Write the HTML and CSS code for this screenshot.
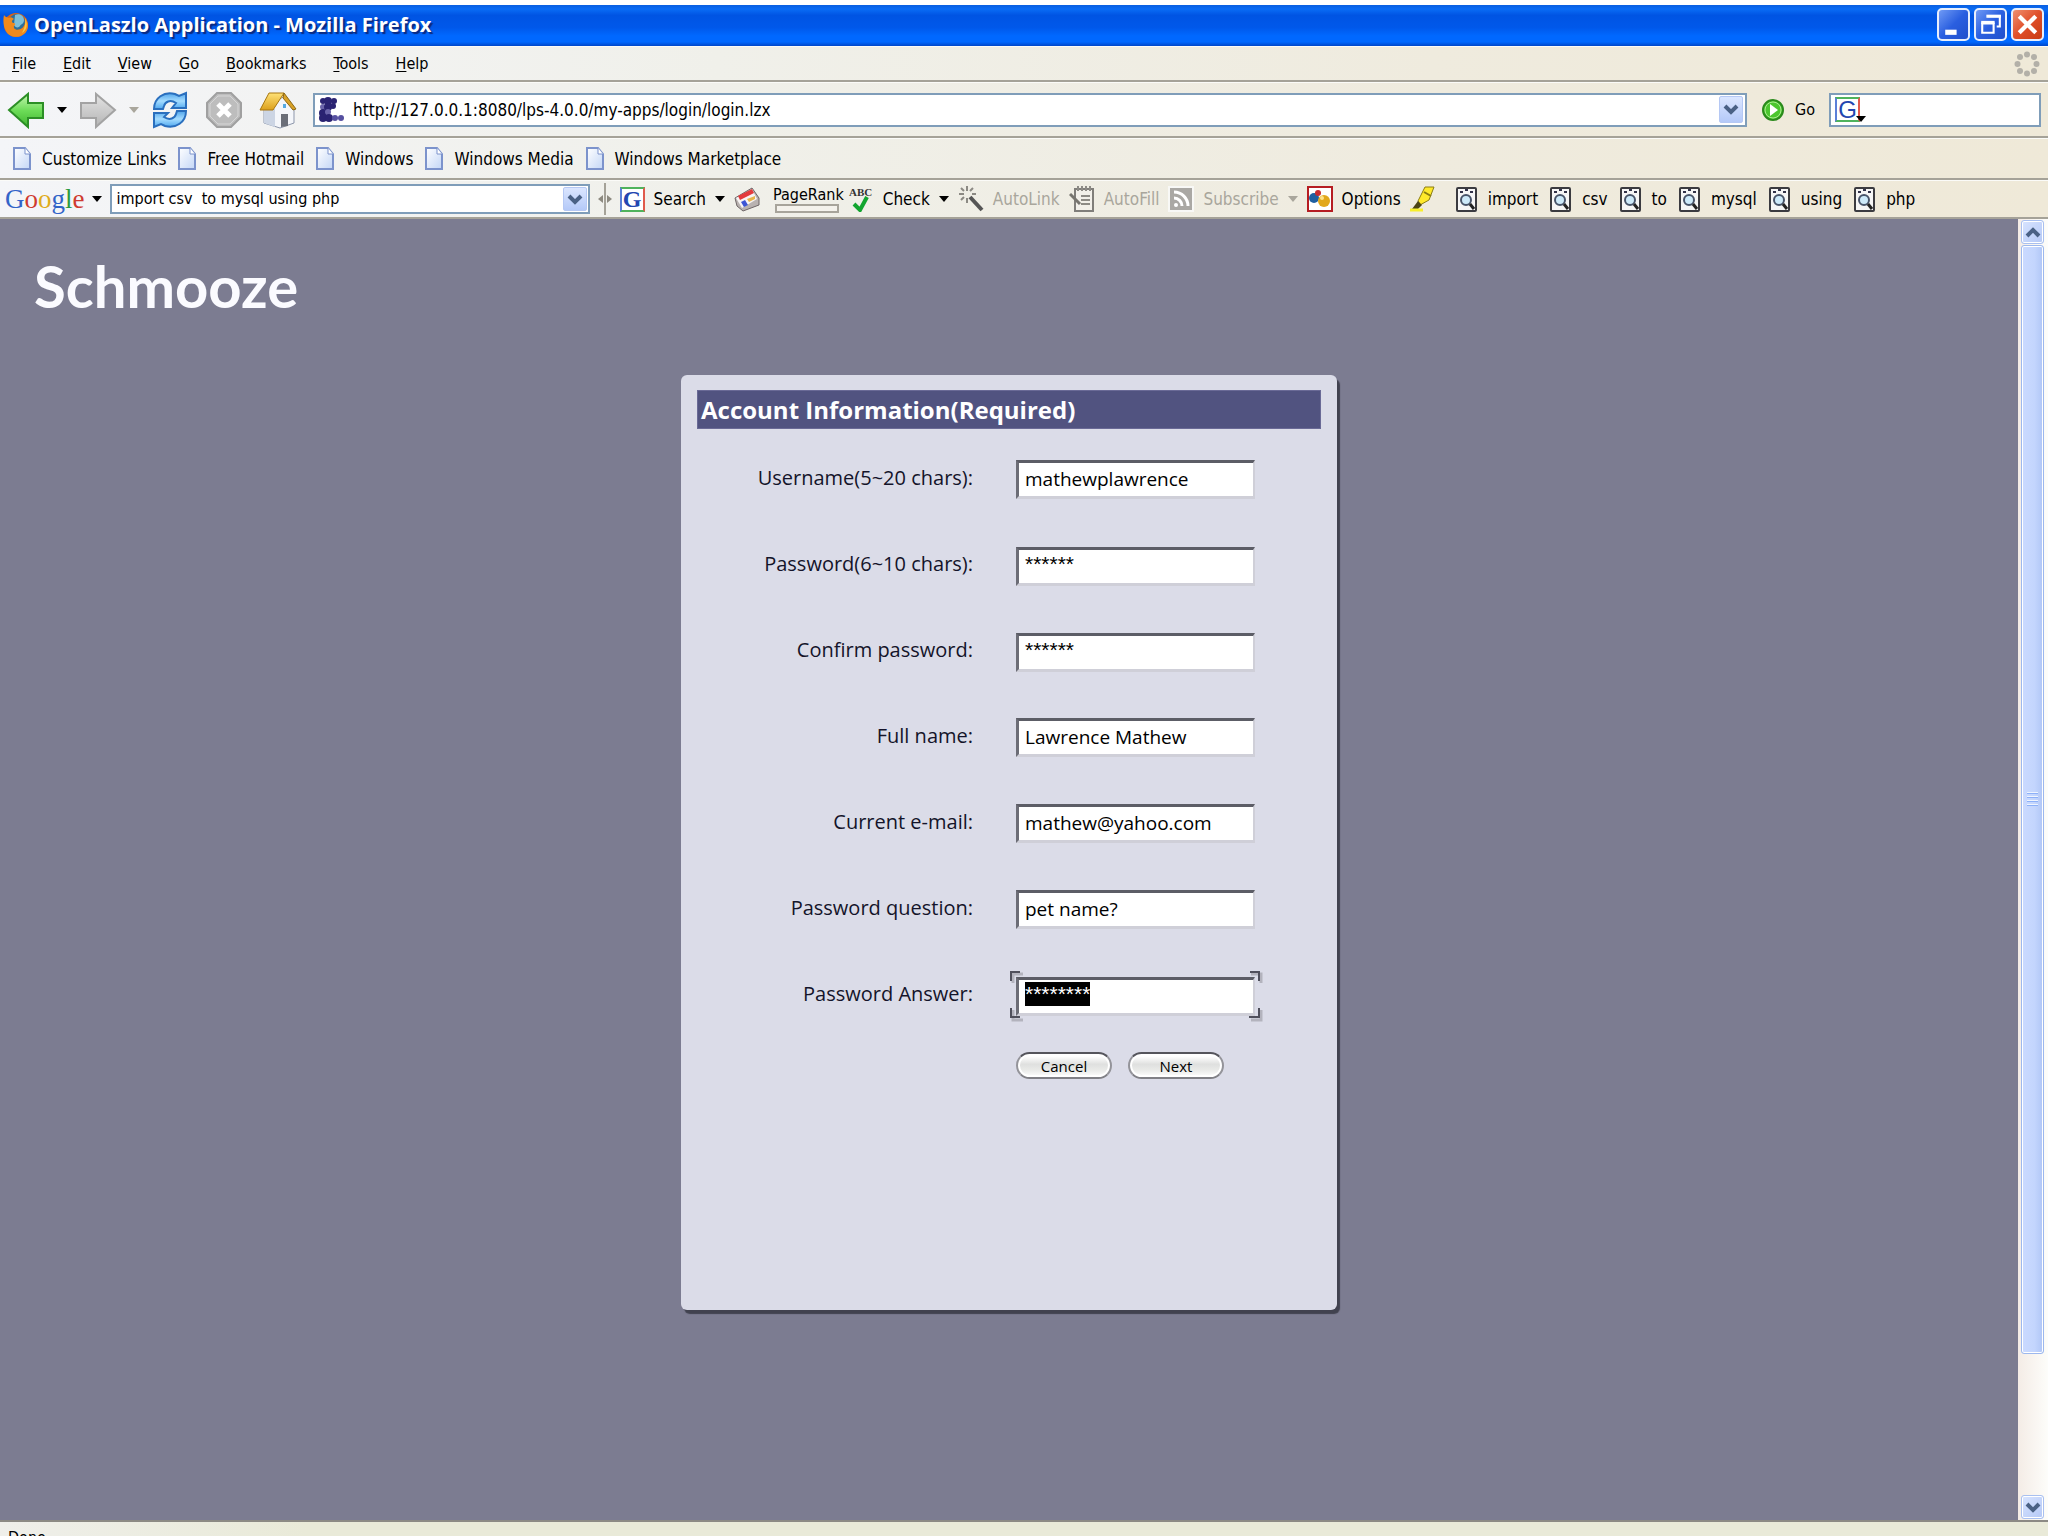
FILE: index.html
```html
<!DOCTYPE html>
<html lang="en">
<head>
<meta charset="utf-8">
<title>OpenLaszlo Application - Mozilla Firefox</title>
<link rel="stylesheet" href="styles.css">
</head>
<body>
<svg class="defs" aria-hidden="true">
  <defs>
    <linearGradient id="gGreen" x1="0" y1="0" x2="0" y2="1"><stop offset="0" stop-color="#c4f6b0"/><stop offset=".5" stop-color="#6ddc58"/><stop offset="1" stop-color="#3fb52f"/></linearGradient>
    <linearGradient id="gGray" x1="0" y1="0" x2="0" y2="1"><stop offset="0" stop-color="#e4e4e4"/><stop offset="1" stop-color="#b4b4b4"/></linearGradient>
    <linearGradient id="gBlue" x1="0" y1="0" x2="0" y2="1"><stop offset="0" stop-color="#4fa4ea"/><stop offset=".5" stop-color="#a5dcff"/><stop offset="1" stop-color="#4fa8ef"/></linearGradient>
    <linearGradient id="gPage" x1="0" y1="0" x2="1" y2="1"><stop offset="0" stop-color="#ffffff"/><stop offset="1" stop-color="#c3d6f6"/></linearGradient>
    <linearGradient id="gRoof" x1="0" y1="0" x2="0" y2="1"><stop offset="0" stop-color="#ffe277"/><stop offset="1" stop-color="#dca01c"/></linearGradient>
    <symbol id="page" viewBox="0 0 18 23"><path d="M1 1h11l5 6v15H1z" fill="url(#gPage)" stroke="#7c93cc" stroke-width="2"/><path d="M12 1v6h5" fill="#fff" stroke="#7c93cc"/></symbol>
    <symbol id="tri" viewBox="0 0 10 6"><path d="M0 0h10L5 6z" fill="currentColor"/></symbol>
    <symbol id="chev" viewBox="0 0 16 11"><path d="M2 2l6 6 6-6" fill="none" stroke="#4a6185" stroke-width="4"/></symbol>
    <symbol id="find" viewBox="0 0 21 25"><rect x="1" y="1" width="19" height="23" rx="1" fill="#f6f6f6" stroke="#3b3b40" stroke-width="2"/><path d="M4 5h3M9 3h3M14 5h3" stroke="#33334a" stroke-width="2"/><circle cx="10" cy="13" r="5" fill="#cdeafa" stroke="#48546a" stroke-width="2"/><path d="M14 17l4 5" stroke="#222" stroke-width="3"/></symbol>
  </defs>
</svg>

<header class="titlebar">
  <svg class="fox" viewBox="0 0 26 26"><circle cx="13" cy="13" r="12" fill="#d8641a"/><circle cx="14" cy="10" r="8" fill="#2c6f9c"/><path d="M12 3c5-2 9 1 9 5s-3 4-4 6-5 2-6-1z" fill="#7fc0d8"/><path d="M1 3c1 2 3 2 5 3 2-1 4 0 5 1-2 1-3 3-1 4 2 0 3 1 1 3-1 3 3 5 7 3 4-2 5-6 4-11 4 5 4 12-1 16-6 5-15 3-18-3C0 14 0 8 1 3z" fill="#f08a1d"/><path d="M22 6c3 6 2 12-3 15 2-4 4-8 3-15z" fill="#fbc743"/></svg>
  <h1 class="window-title">OpenLaszlo Application - Mozilla Firefox</h1>
  <div class="window-buttons">
    <button class="win" aria-label="Minimize"><svg viewBox="0 0 28 28"><path d="M6 19h11v5H6z" fill="#fff"/></svg></button>
    <button class="win" aria-label="Restore"><svg viewBox="0 0 28 28"><path d="M11 6h12v10h-3" fill="none" stroke="#fff" stroke-width="2"/><path d="M10 6h14" stroke="#fff" stroke-width="3"/><path d="M6 13h11v9H6z" fill="none" stroke="#fff" stroke-width="2"/><path d="M5 12h13" stroke="#fff" stroke-width="3"/></svg></button>
    <button class="win close" aria-label="Close"><svg viewBox="0 0 28 28"><path d="M6 6l16 16M22 6L6 22" stroke="#fff" stroke-width="4"/></svg></button>
  </div>
</header>

<div class="chrome">
  <nav class="bar menubar">
    <button><u>F</u>ile</button>
    <button><u>E</u>dit</button>
    <button><u>V</u>iew</button>
    <button><u>G</u>o</button>
    <button><u>B</u>ookmarks</button>
    <button><u>T</u>ools</button>
    <button><u>H</u>elp</button>
    <svg class="throbber" viewBox="0 0 26 26" fill="#b3b0a8"><circle cx="13" cy="3.500" r="3"/><circle cx="20" cy="6" r="3"/><circle cx="22.500" cy="13" r="3"/><circle cx="20" cy="20" r="3"/><circle cx="13" cy="22.500" r="3"/><circle cx="6" cy="20" r="3"/><circle cx="3.500" cy="13" r="3"/><circle cx="6" cy="6" r="3"/></svg>
  </nav>

  <div class="bar navbar">
    <button aria-label="Back"><svg class="i38" viewBox="0 0 38 38"><path d="M2 19L21 3v9h15v15H21v9z" fill="url(#gGreen)" stroke="#2c8f26" stroke-width="2"/></svg></button>
    <button class="drop" aria-label="Back history"><svg class="tri"><use href="#tri"/></svg></button>
    <button aria-label="Forward"><svg class="i38" viewBox="0 0 38 38"><path d="M36 19L17 3v9H2v15h15v9z" fill="url(#gGray)" stroke="#a3a3a3" stroke-width="2"/></svg></button>
    <button class="drop dim" aria-label="Forward history"><svg class="tri"><use href="#tri"/></svg></button>
    <button class="tool" aria-label="Reload"><svg class="i38" viewBox="0 0 38 38"><path d="M3 18C3 7 13 0 24 3l4 2 7-3v15H21l4-5c-6-4-11-1-12 3l-1 3z" fill="url(#gBlue)" stroke="#2a6fbe" stroke-width="2"/><path d="M35 20c0 11-10 18-21 15l-4-2-7 3V22h14l-4 4c6 4 11 1 12-3l1-3z" fill="url(#gBlue)" stroke="#2a6fbe" stroke-width="2"/></svg></button>
    <button class="tool" aria-label="Stop"><svg class="i38" viewBox="0 0 38 38"><path d="M12 2h14l10 10v14L26 36H12L2 26V12z" fill="#bdbdbd" stroke="#a0a0a0" stroke-width="2"/><path d="M13 5h12l8 8v12l-8 8H13l-8-8V13z" fill="none" stroke="#d6d6d6"/><path d="M13 13l12 12M25 13L13 25" stroke="#fff" stroke-width="5"/></svg></button>
    <button class="tool" aria-label="Home"><svg class="i38" viewBox="0 0 38 38"><path d="M5 17v15l16 5 14-5V17L26 5z" fill="#f4f6fa" stroke="#8d97ab"/><path d="M5 17v15l11 4V18z" fill="#ccd5e4"/><path d="M22 23h7v12l-7 1z" fill="#6a6e78"/><path d="M24 13h3v4h-3z" fill="#55a9e2"/><path d="M10 2h15L14 19H1z" fill="url(#gRoof)" stroke="#a87710"/><path d="M25 2l12 16-3 1-10-12z" fill="#d9a227" stroke="#8c6713"/></svg></button>
    <div class="combo urlbox">
      <svg class="favicon" viewBox="0 0 25 25" fill="#2a2372"><circle cx="4" cy="4" r="3"/><circle cx="9" cy="4" r="4"/><circle cx="15" cy="4" r="3"/><circle cx="4" cy="10" r="3" fill="#6a64aa"/><circle cx="9" cy="10" r="4"/><circle cx="14" cy="9" r="3"/><circle cx="4" cy="16" r="4"/><circle cx="9" cy="15" r="3" fill="#6a64aa"/><circle cx="4" cy="21" r="4"/><circle cx="10" cy="21" r="4"/><circle cx="16" cy="21" r="3" fill="#5650a0"/><circle cx="22" cy="21" r="3" fill="#5650a0"/></svg>
      <input type="text" aria-label="Location" value="http://127.0.0.1:8080/lps-4.0.0/my-apps/login/login.lzx">
      <button class="arrow" aria-label="Show history"><svg class="chev"><use href="#chev"/></svg></button>
    </div>
    <button class="go"><svg class="i24" viewBox="0 0 24 24"><circle cx="12" cy="12" r="10" fill="#4cc62f" stroke="#2b8a1c" stroke-width="2"/><circle cx="12" cy="12" r="8" fill="none" stroke="#a9ec8e"/><path d="M9 6l8 6-8 6z" fill="#fff"/></svg>Go</button>
    <div class="combo searchbox">
      <button class="engine" aria-label="Search engine"><span class="gbox">G</span><svg class="tri"><use href="#tri"/></svg></button>
      <input type="text" aria-label="Web search">
    </div>
  </div>

  <nav class="bar links">
    <a href="#"><svg class="page"><use href="#page"/></svg>Customize Links</a>
    <a href="#"><svg class="page"><use href="#page"/></svg>Free Hotmail</a>
    <a href="#"><svg class="page"><use href="#page"/></svg>Windows</a>
    <a href="#"><svg class="page"><use href="#page"/></svg>Windows Media</a>
    <a href="#"><svg class="page"><use href="#page"/></svg>Windows Marketplace</a>
  </nav>

  <div class="bar googlebar">
    <button class="logo"><span class="wordmark"><span class="b">G</span><span class="r">o</span><span class="y">o</span><span class="b">g</span><span class="g">l</span><span class="r">e</span></span><svg class="tri"><use href="#tri"/></svg></button>
    <div class="combo querybox">
      <input type="text" aria-label="Google search" value="import csv  to mysql using php">
      <button class="arrow" aria-label="Search history"><svg class="chev"><use href="#chev"/></svg></button>
    </div>
    <svg class="splitter" viewBox="0 0 14 32"><path d="M7 0v32" stroke="#a5a298" stroke-width="2"/><path d="M5 12v8l-5-4zM9 12v8l5-4z" fill="#8d8a80"/></svg>
    <button class="gtool search"><span class="gbox">G</span>Search<svg class="tri"><use href="#tri"/></svg></button>
    <button class="gtool" aria-label="News"><svg class="i26" viewBox="0 0 26 26"><path d="M1 12l17-10 7 10v7L9 25 3 20z" fill="#b8b2b0" stroke="#6e6667"/><path d="M2 12L18 3l5 10L8 22z" fill="#f7f4f4"/><path d="M4 10l14-7 2 4-14 7z" fill="#e33b3d"/><path d="M7 16l4-2 3 5-4 2z" fill="#3c55d4"/><path d="M13 13l8-3v3l-6 3z" fill="#e7b54c"/></svg></button>
    <div class="pagerank"><span>PageRank</span><i></i></div>
    <button class="gtool check"><svg class="i26" viewBox="0 0 26 26"><text x="1" y="10" class="abc">ABC</text><path d="M6 18l6 6 7-13" fill="none" stroke="#12a52f" stroke-width="4"/></svg>Check<svg class="tri"><use href="#tri"/></svg></button>
    <button class="gtool dim"><svg class="i26" viewBox="0 0 26 26"><path d="M12 11l12 13" stroke="#555" stroke-width="4"/><path d="M9 0v5M9 12v5M1 8h5M3 2l3 3M15 2l-3 3M3 14l3-3M14 8h4" stroke="#8c8a84" stroke-width="2"/></svg>AutoLink</button>
    <button class="gtool dim"><svg class="i26" viewBox="0 0 26 26"><path d="M6 3h18v22H6z" fill="#f2f0ea" stroke="#807e7a" stroke-width="2"/><path d="M9 0v5M13 0v5M17 0v5M21 0v5M12 10h9M12 14h9M12 18h9" stroke="#8d8b86" stroke-width="2"/><path d="M1 8l10 10" stroke="#77756f" stroke-width="3"/></svg>AutoFill</button>
    <button class="gtool dim"><svg class="i26" viewBox="0 0 26 26"><rect x="1" y="1" width="24" height="24" fill="#aaa8a4" stroke="#f8f8f6" stroke-width="2"/><circle cx="8" cy="19" r="2" fill="#fff"/><path d="M6 12a8 8 0 018 8M6 6a14 14 0 0114 14" fill="none" stroke="#fff" stroke-width="3"/></svg>Subscribe<svg class="tri"><use href="#tri"/></svg></button>
    <button class="gtool"><svg class="i26" viewBox="0 0 26 26"><rect x="1" y="1" width="24" height="24" fill="#fff" stroke="#b61d22" stroke-width="2"/><circle cx="7" cy="12" r="5" fill="#1f5fa0"/><circle cx="11" cy="7" r="3" fill="#c72a2e"/><circle cx="17" cy="15" r="6" fill="#e2a81b"/><circle cx="15" cy="12" r="2" fill="#ffe28a"/></svg>Options</button>
    <button class="gtool" aria-label="Highlight"><svg class="i26" viewBox="0 0 26 26"><path d="M15 1h9l-5 13-9 5-2-4z" fill="#ffe92b" stroke="#8b7d12"/><path d="M14 6l7 4" stroke="#8b7d12" stroke-width="2"/><path d="M8 15l4 4-4 4H2z" fill="#4b4412"/><path d="M0 24h13" stroke="#f7ef2a" stroke-width="3"/></svg></button>
    <div class="words">
      <button><svg class="find"><use href="#find"/></svg>import</button>
      <button><svg class="find"><use href="#find"/></svg>csv</button>
      <button><svg class="find"><use href="#find"/></svg>to</button>
      <button><svg class="find"><use href="#find"/></svg>mysql</button>
      <button><svg class="find"><use href="#find"/></svg>using</button>
      <button><svg class="find"><use href="#find"/></svg>php</button>
    </div>
  </div>
</div>

<div class="viewport">
  <main class="app">
    <h2 class="brand">Schmooze</h2>
    <form class="panel">
      <h3 class="panel-title">Account Information(Required)</h3>
      <div class="fields">
        <label for="user">Username(5~20 chars):</label>
        <div class="field"><input id="user" type="text" value="mathewplawrence"></div>
        <label for="pass">Password(6~10 chars):</label>
        <div class="field"><input id="pass" class="masked" type="text" value="******"></div>
        <label for="confirm">Confirm password:</label>
        <div class="field"><input id="confirm" class="masked" type="text" value="******"></div>
        <label for="full">Full name:</label>
        <div class="field"><input id="full" type="text" value="Lawrence Mathew"></div>
        <label for="mail">Current e-mail:</label>
        <div class="field"><input id="mail" type="text" value="mathew@yahoo.com"></div>
        <label for="question">Password question:</label>
        <div class="field"><input id="question" type="text" value="pet name?"></div>
        <label for="answer">Password Answer:</label>
        <div class="field">
          <input id="answer" class="masked" type="text" value="********">
          <svg class="brackets" viewBox="0 0 254 52" fill="none" stroke-width="3"><path d="M4 13V4h10M242 4h10v9M252 40v10h-10M14 50H4V40" stroke="#b3b3bd"/><path d="M2 11V2h9M241 2h9v9M250 38v9h-10M11 47H2V38" stroke="#50505c" stroke-width="2"/></svg>
        </div>
      </div>
      <div class="actions">
        <button type="button">Cancel</button>
        <button type="button">Next</button>
      </div>
    </form>
  </main>
  <div class="scrollbar">
    <button class="sb" aria-label="Scroll up"><svg class="chev up"><use href="#chev"/></svg></button>
    <div class="track"><div class="thumb"><i></i><i></i><i></i><i></i></div></div>
    <button class="sb" aria-label="Scroll down"><svg class="chev"><use href="#chev"/></svg></button>
  </div>
</div>

<footer class="status">Done</footer>
<script src="script.js"></script>
</body>
</html>
```
FILE: styles.css
```css
* { box-sizing: border-box; }

body {
  margin: 0;
  height: 100vh;
  display: flex;
  flex-direction: column;
  overflow: hidden;
  background: #fff;
  color: #000;
  font: 16px/20px "DejaVu Sans Condensed", "DejaVu Sans", sans-serif;
}

button, input { font: inherit; color: inherit; }
button { margin: 0; padding: 0; border: 0; background: none; white-space: nowrap; }
input { min-width: 0; outline: 0; }
svg { display: block; flex: none; }
.defs { position: absolute; width: 0; height: 0; }

/* title bar */
.titlebar {
  flex: none;
  display: flex;
  align-items: center;
  gap: 5px;
  height: 41px;
  margin-top: 5px;
  padding: 0 4px 2px 3px;
  background: linear-gradient(#0a5fe0, #0a6cf5 10%, #0054e3 25%, #0058ea 55%, #0068ff 75%, #0068ff 90%, #0046c8);
}
.fox { width: 26px; height: 26px; }
.window-title {
  flex: 1;
  margin: 0;
  color: #fff;
  font: bold 20px/28px "Open Sans", sans-serif;
  text-shadow: 2px 2px 1px #0a2a80;
}
.window-buttons { display: flex; gap: 4px; }
.win {
  width: 33px;
  height: 33px;
  border: 2px solid #e8effc;
  border-radius: 5px;
  background: linear-gradient(135deg, #6f9af5, #2a5fe0 50%, #2050cc);
}
.win svg { width: 29px; height: 29px; }
.close { background: linear-gradient(135deg, #f09070, #e04f2a 50%, #c83c14); }

/* toolbars */
.chrome {
  flex: none;
  background: linear-gradient(90deg, #f4f5f8, #f0f0ea 35%, #efebde 70%, #efe9d8);
}
.bar {
  display: flex;
  align-items: center;
  border-bottom: 2px solid #a5a298;
  border-top: 1px solid #fbfbf8;
}
.tri { width: 10px; height: 6px; }
.chev { width: 16px; height: 11px; }
.up { transform: rotate(180deg); }
.i38 { width: 38px; height: 38px; }
.i26 { width: 26px; height: 26px; }
.i24 { width: 24px; height: 24px; }
.dim { color: #a9a69c; }

.menubar { height: 36px; padding: 0 8px 0 12px; gap: 27px; }
.menubar u { text-underline-offset: 2px; }
.throbber { width: 26px; height: 26px; margin-left: auto; }

.navbar { height: 56px; padding: 0 7px; }
.drop { margin: 0 12px; }
.tool { margin-right: 16px; }
.combo {
  display: flex;
  align-items: center;
  border: 2px solid #7f9db9;
  background: #fff;
}
.combo input { flex: 1; padding: 0; border: 0; background: none; white-space: pre; }
.arrow {
  display: grid;
  place-items: center;
  width: 24px;
  height: 27px;
  border: 1px solid #b5c8f4;
  border-radius: 2px;
  background: linear-gradient(#dbe6ff, #b4c9f8);
}
.urlbox { flex: 1; height: 34px; padding: 0 2px 0 4px; gap: 9px; font-size: 17px; }
.favicon { width: 25px; height: 25px; }
.go { display: flex; align-items: center; gap: 10px; margin: 0 14px; }
.searchbox { width: 212px; height: 34px; padding-left: 4px; }
.engine { display: flex; align-items: flex-end; }
.engine .tri { margin-left: -4px; }
.gbox {
  display: grid;
  place-items: center;
  width: 25px;
  height: 25px;
  border: 2px solid;
  border-color: #4fb35c #e05a4c #4fb35c #5b7fd8;
  background: #fff;
  color: #2346b0;
  font: 24px/20px "Liberation Sans", sans-serif;
}

.links { height: 42px; padding-left: 13px; gap: 12px; font-size: 17px; }
.links a { display: flex; align-items: center; gap: 11px; color: #000; text-decoration: none; }
.page { width: 18px; height: 23px; }

.googlebar { height: 39px; padding-left: 5px; font-size: 17px; }
.logo { display: flex; align-items: center; gap: 7px; }
.wordmark { font: 27px/30px "Liberation Serif", serif; }
.b { color: #3364c8; }
.r { color: #cf3b30; }
.y { color: #e0ac1c; }
.g { color: #2b9a3c; }
.querybox { width: 480px; height: 30px; margin-left: 8px; padding: 0 1px 0 5px; font-size: 16px; }
.querybox .arrow { height: 24px; }
.splitter { width: 14px; height: 32px; margin: 0 8px; }
.gtool { display: flex; align-items: center; gap: 9px; margin-right: 9px; }
.search .gbox { font: bold 24px/20px "Liberation Serif", serif; }
.pagerank { margin: 0 4px; font-size: 16px; line-height: 17px; }
.pagerank i { display: block; width: 64px; height: 9px; margin: 1px 0 0 2px; border: 2px solid #a7a49b; background: #f4f2ec; }
.abc { font: bold 11px "Liberation Serif", serif; fill: #333; }
.words { display: flex; gap: 12px; margin-left: 11px; }
.words button { display: flex; align-items: center; gap: 11px; }
.find { width: 21px; height: 25px; }

/* page area */
.viewport { flex: 1; min-height: 0; display: flex; }
.app { flex: 1; background: #7c7c91; font-family: "Open Sans", sans-serif; }
.brand {
  margin: 31px 0 53px 34px;
  color: #fbfbff;
  font-family: Lato, "Open Sans", sans-serif;
  font-size: 58px;
  line-height: 72px;
}
.panel {
  width: 656px;
  min-height: 935px;
  margin: 0 auto;
  padding: 15px 16px;
  border-radius: 6px;
  background: #dbdce8;
  box-shadow: 3px 4px 1px #41424f;
}
.panel-title {
  margin: 0 0 31px;
  padding: 0 3px;
  border: 1px solid #6a6a96;
  background: #515380;
  color: #fff;
  font-size: 24px;
  line-height: 37px;
}
.fields {
  display: grid;
  grid-template-columns: 276px 239px;
  column-gap: 43px;
  row-gap: 47px;
  font-size: 20px;
  line-height: 36px;
}
.fields label { color: #14142a; text-align: right; }
.field { position: relative; height: 39px; }
.field input {
  width: 100%;
  height: 39px;
  padding: 0 6px 1px;
  border: 3px solid;
  border-width: 3px 2px 3px 3px;
  border-color: #5c5d66 #cfcfd8 #cfcfd8 #6c6d76;
  background: #fff;
  font-size: 19px;
  line-height: 28px;
}
.field .masked { padding-bottom: 5px; font-family: "Liberation Sans", sans-serif; font-size: 21px; }
.field input::selection { background: #000; color: #fff; }
.brackets { position: absolute; left: -7px; top: -6px; width: 254px; height: 52px; pointer-events: none; }
.actions { display: flex; gap: 16px; margin: 37px 0 0 319px; }
.actions button {
  width: 96px;
  height: 27px;
  padding-top: 2px;
  border: 2px solid;
  border-color: #55555c #94949a #808086 #94949a;
  border-radius: 14px;
  background: linear-gradient(#fff 10%, #dfe0df 45%, #e9eae8 70%, #fff);
  box-shadow: inset 0 0 0 2px #fff;
  font-size: 15px;
  line-height: 21px;
}

/* scroll bar */
.scrollbar {
  flex: none;
  display: flex;
  flex-direction: column;
  width: 30px;
  padding: 1px 4px 1px 3px;
  background: linear-gradient(90deg, #f4ece6, #fdfdfa);
}
.sb {
  display: grid;
  place-items: center;
  height: 24px;
  border: 1px solid #a9c0f0;
  border-radius: 3px;
  box-shadow: inset 0 0 0 1px #fff;
  background: linear-gradient(135deg, #d8e4ff, #b4c8f6);
}
.track { flex: 1; padding: 1px 0 4px; }
.thumb {
  display: flex;
  flex-direction: column;
  align-items: center;
  justify-content: center;
  gap: 2px;
  height: 89%;
  border: 1px solid #9db8ee;
  border-radius: 3px;
  box-shadow: inset 0 0 0 1px #fff;
  background: linear-gradient(90deg, #cbdaff, #c3d5fd 60%, #b0c6f6);
}
.thumb i { width: 11px; height: 2px; background: #eef4ff; border-bottom: 1px solid #8cb0f8; }

.status {
  flex: none;
  height: 16px;
  overflow: hidden;
  padding: 6px 8px 0;
  border-top: 2px solid #8c8a84;
  background: linear-gradient(90deg, #efefea, #e9ead8 15%);
}
```
FILE: script.js
```js
// Start with the last answer selected, ready to be typed over.
const answer = document.getElementById("answer");
answer.focus();
answer.select();
```
